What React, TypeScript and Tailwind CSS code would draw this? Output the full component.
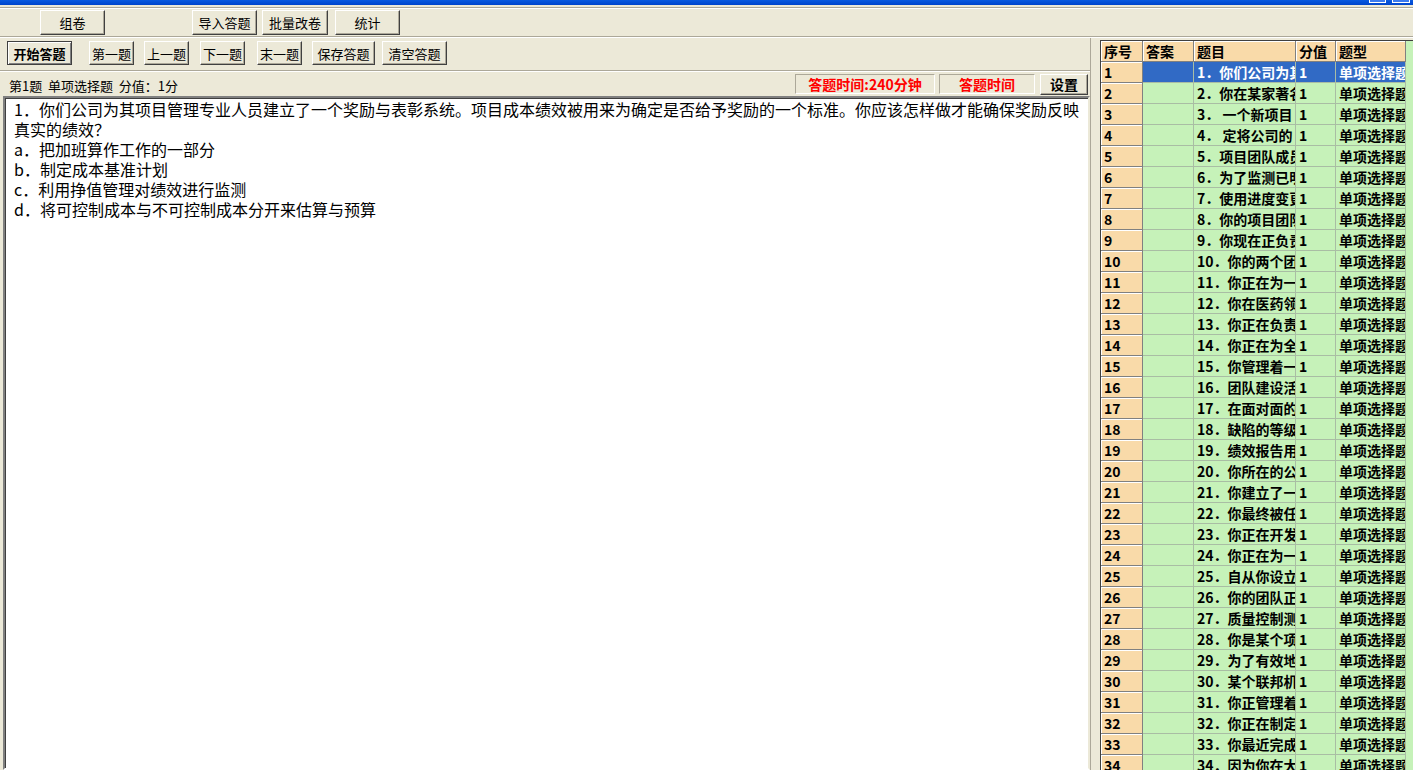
import React from "react";

const btn =
  "h-[25px] shrink-0 bg-[#ECE9D8] border border-t-white border-l-white border-r-[#404040] border-b-[#404040] shadow-[inset_-1px_-1px_0_#ACA899] text-[13px] leading-none text-black flex items-center justify-center";

const titles = [
  "你们公司为其项目管理",
  "你在某家著名公司",
  " 一个新项目",
  " 定将公司的",
  "项目团队成员",
  "为了监测已明确",
  "使用进度变更",
  "你的项目团队",
  "你现在正负责",
  "你的两个团队",
  "你正在为一个",
  "你在医药领域",
  "你正在负责某",
  "你正在为全球",
  "你管理着一个",
  "团队建设活动",
  "在面对面的会",
  "缺陷的等级是",
  "绩效报告用于",
  "你所在的公司",
  "你建立了一个",
  "你最终被任命",
  "你正在开发一",
  "你正在为一家",
  "自从你设立了",
  "你的团队正在",
  "质量控制测量",
  "你是某个项目",
  "为了有效地管",
  "某个联邦机构",
  "你正管理着一",
  "你正在制定一",
  "你最近完成了",
  "因为你在大型",
  "你的项目经理",
];

const cols = [
  { label: "序号", w: "w-[42px]" },
  { label: "答案", w: "w-[51px]" },
  { label: "题目", w: "w-[102px]" },
  { label: "分值", w: "w-[40px]" },
  { label: "题型", w: "w-[70px]" },
];

const fixedCell =
  "h-[21px] shrink-0 bg-[#F9DAA9] border-r border-b border-r-[#808080] border-b-[#808080] shadow-[inset_1px_1px_0_#fff] pl-[3px] overflow-hidden whitespace-nowrap leading-[21px]";

function Grid() {
  return (
    <div className="h-full bg-[#C6F2B9] border-t border-l border-t-[#404040] border-l-[#404040] overflow-hidden font-bold text-[14px] text-black">
      <div className="flex">
        {cols.map((c) => (
          <div key={c.label} className={`${fixedCell} ${c.w}`}>
            {c.label}
          </div>
        ))}
      </div>
      {titles.map((t, i) => {
        const sel = i === 0;
        const cell = `h-[21px] shrink-0 border-r border-b border-r-[#A9BDA4] border-b-[#A9BDA4] pl-[3px] overflow-hidden whitespace-pre leading-[21px] ${
          sel ? "bg-[#316AC5] text-white" : ""
        }`;
        return (
          <div key={i} className="flex">
            <div className={`${fixedCell} w-[42px]`}>{i + 1}</div>
            <div className={`${cell} w-[51px]`}></div>
            <div className={`${cell} w-[102px]`}>{`${i + 1}．${t}`}</div>
            <div className={`${cell} w-[40px]`}>1</div>
            <div className={`${cell} w-[70px]`}>单项选择题</div>
          </div>
        );
      })}
    </div>
  );
}

export default function App() {
  return (
    <div className="w-[1413px] h-[770px] overflow-hidden bg-[#ECE9D8] flex flex-col font-['Noto_Sans_CJK_SC',sans-serif] text-black">
      {/* title bar remnant */}
      <div className="h-[5px] shrink-0 bg-gradient-to-b from-[#0A5AE0] to-[#0044CC] flex justify-end items-start gap-[6px] pr-[3px]">
        <div className="w-[17px] h-[3px] bg-[#3C7BF0] border-x border-b border-white" />
        <div className="w-[18px] h-[3px] bg-[#3C7BF0] border-x border-b border-white" />
      </div>
      <div className="h-[2px] shrink-0" />

      {/* toolbar 1 */}
      <div className="h-[31px] shrink-0 border-t border-b border-t-[#ACA899] border-b-white shadow-[inset_0_1px_0_#fff,inset_0_-1px_0_#ACA899] flex items-start pt-[2px]">
        <button className={`${btn} w-[65px] ml-[40px]`}>组卷</button>
        <button className={`${btn} w-[65px] ml-[87px]`}>导入答题</button>
        <button className={`${btn} w-[66px] ml-[5px]`}>批量改卷</button>
        <button className={`${btn} w-[65px] ml-[7px]`}>统计</button>
      </div>

      <div className="flex-1 flex min-h-0">
        {/* left */}
        <div className="w-[1090px] shrink-0 flex flex-col">
          <div className="h-[34px] shrink-0 border-b border-b-white shadow-[inset_0_-1px_0_#ACA899] flex items-start pt-[3px]">
            <button className="h-[24px] w-[65px] ml-[7px] shrink-0 bg-[#ECE9D8] border border-[#404040] shadow-[inset_1px_1px_0_#fff,inset_-1px_-1px_0_#808080] text-[13px] font-bold leading-none flex items-center justify-center">
              开始答题
            </button>
            <button className={`${btn} !h-[24px] w-[45px] ml-[17px]`}>第一题</button>
            <button className={`${btn} !h-[24px] w-[45px] ml-[10px]`}>上一题</button>
            <button className={`${btn} !h-[24px] w-[45px] ml-[11px]`}>下一题</button>
            <button className={`${btn} !h-[24px] w-[45px] ml-[12px]`}>末一题</button>
            <button className={`${btn} !h-[24px] w-[63px] ml-[10px]`}>保存答题</button>
            <button className={`${btn} !h-[24px] w-[65px] ml-[7px]`}>清空答题</button>
          </div>

          <div className="h-[24px] shrink-0 flex items-center">
            <span className="ml-[9px] text-[13px] whitespace-pre leading-none pt-[2px]">
              {"第1题  单项选择题  分值：1分"}
            </span>
            <div className="flex-1" />
            <div className="h-[20px] w-[140px] border border-t-[#ACA899] border-l-[#ACA899] border-r-white border-b-white flex items-center justify-center text-[14px] font-bold text-[#FF0000] leading-none">
              答题时间:240分钟
            </div>
            <div className="h-[20px] w-[96px] ml-[4px] border border-t-[#ACA899] border-l-[#ACA899] border-r-white border-b-white flex items-center justify-center text-[14px] font-bold text-[#FF0000] leading-none">
              答题时间
            </div>
            <button className={`${btn} !h-[21px] w-[48px] ml-[5px] mr-[2px] !text-[14px] font-bold`}>
              设置
            </button>
          </div>

          <div className="flex-1 ml-[3px] bg-white border-2 border-t-[#808080] border-l-[#808080] border-r-[#ECE9D8] border-b-white shadow-[inset_1px_1px_0_#404040] pl-[9px] pt-[1px] text-[16px] leading-[20px] overflow-hidden">
            <div>
              1．你们公司为其项目管理专业人员建立了一个奖励与表彰系统。项目成本绩效被用来为确定是否给予奖励的一个标准。你应该怎样做才能确保奖励反映
              <br />
              真实的绩效？
            </div>
            <div>a．把加班算作工作的一部分</div>
            <div>b．制定成本基准计划</div>
            <div>c．利用挣值管理对绩效进行监测</div>
            <div>d．将可控制成本与不可控制成本分开来估算与预算</div>
          </div>
        </div>

        {/* right */}
        <div className="flex-1 min-w-0 border-l border-l-[#ACA899] pl-[9px] pt-[2px] flex flex-col">
          <div className="flex-1 min-h-0">
            <Grid />
          </div>
        </div>
      </div>
    </div>
  );
}
